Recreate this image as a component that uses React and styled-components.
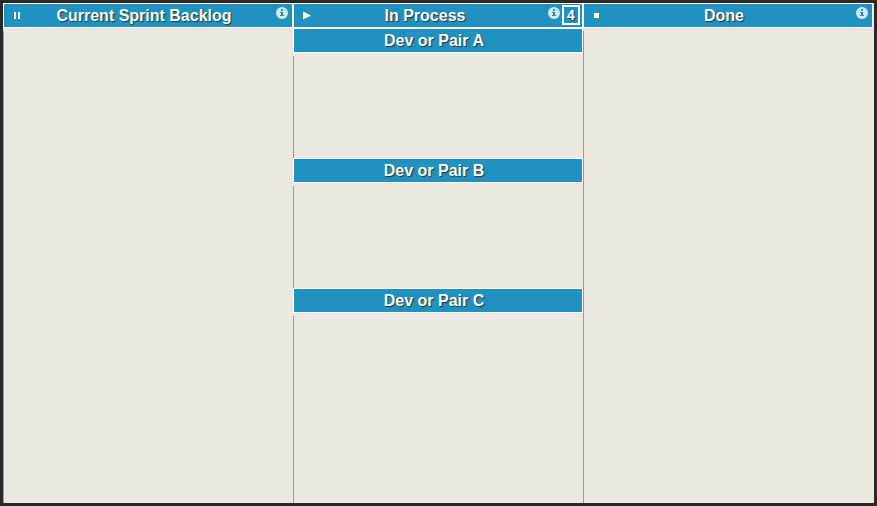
import React from "react";
import styled, { createGlobalStyle, css } from "styled-components";

const GlobalStyle = createGlobalStyle`
  * { box-sizing: border-box; }
  body { margin: 0; overflow: hidden; background: #2b2829; }
`;

const Board = styled.main`
  display: grid;
  grid-template-columns: 290px 290px 291px;
  width: 877px;
  height: 506px;
  padding: 3px;
  background: #2b2829;
  font-family: "Liberation Sans", Arial, sans-serif;
`;

const Column = styled.section`
  display: flex;
  flex-direction: column;
  min-width: 0;
  background: #ece7e0;
`;

const bar = css`
  display: grid;
  align-items: center;
  flex: none;
  height: 25px;
  width: 290px;
  border: 1px solid #fff;
  background: #2191c0;
  color: #f8ffff;
`;

const Header = styled.header`
  ${bar}
  grid-template-columns: 26px 1fr ${(p) => (p.$limited ? 52 : 34)}px;
`;

const LaneHeader = styled.header`
  ${bar}
  justify-content: center;
  padding-right: 8px;
`;

const Title = styled.h2`
  margin: 0;
  font-size: 16px;
  line-height: 22px;
  font-weight: bold;
  text-align: center;
  white-space: nowrap;
  text-shadow: 1px 1px 1px #333;
`;

const StateIcon = styled.svg`
  display: block;
  width: 12px;
  height: 10px;
  margin-left: 8px;
  fill: #fff;
`;

const Tools = styled.div`
  display: flex;
  align-items: flex-start;
  justify-content: flex-end;
  align-self: stretch;
  gap: 2px;
  padding: 1px ${(p) => (p.$limited ? 2 : 4)}px 0 0;
`;

const Info = styled.svg`
  flex: none;
  width: 12px;
  height: 12px;
  margin-top: 2px;
`;

const Limit = styled.span`
  width: 18px;
  height: 20px;
  border: 2px solid #fff;
  font-size: 14px;
  line-height: 17px;
  font-weight: bold;
  text-align: center;
  text-shadow: 1px 1px 1px #333;
`;

const Body = styled.div`
  flex: 1;
  margin-top: 3px;
  border-left: 1px solid #64a9df;
`;

const Lanes = styled.div`
  display: grid;
  flex: 1;
  grid-template-rows: 130px 130px 1fr;
`;

const Lane = styled.section`
  display: flex;
  flex-direction: column;
`;

const STATE_PATHS = {
  paused: "M2 1h2v7H2zM6 1h2v7H6z",
  running: "M1 .5L9 4.5L1 8.5z",
  done: "M2 2h5v5H2z",
};

function InfoIcon() {
  return (
    <Info viewBox="0 0 12 12">
      <circle cx="6" cy="6" r="6" fill="#d2e9f4" />
      <path d="M5 2h2v2H5zM4 5h3v3h1v1H4V8h1V6H4z" fill="#2191c0" />
    </Info>
  );
}

function ColumnHeader({ title, state, limit }) {
  const limited = limit != null;
  return (
    <Header $limited={limited}>
      <StateIcon viewBox="0 0 12 10">
        <path d={STATE_PATHS[state]} />
      </StateIcon>
      <Title>{title}</Title>
      <Tools $limited={limited}>
        <InfoIcon />
        {limited && <Limit>{limit}</Limit>}
      </Tools>
    </Header>
  );
}

export default function App() {
  return (
    <>
      <GlobalStyle />
      <Board>
        <Column>
          <ColumnHeader title="Current Sprint Backlog" state="paused" />
          <Body />
        </Column>
        <Column>
          <ColumnHeader title="In Process" state="running" limit={4} />
          <Lanes>
            {["A", "B", "C"].map((name) => (
              <Lane key={name}>
                <LaneHeader>
                  <Title>Dev or Pair {name}</Title>
                </LaneHeader>
                <Body />
              </Lane>
            ))}
          </Lanes>
        </Column>
        <Column>
          <ColumnHeader title="Done" state="done" />
          <Body />
        </Column>
      </Board>
    </>
  );
}
